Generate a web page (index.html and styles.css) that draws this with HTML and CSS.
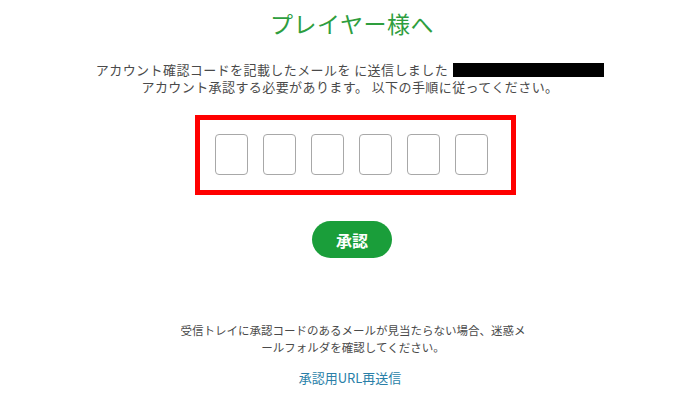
FILE: index.html
```html
<!DOCTYPE html>
<html lang="ja">
<head>
<meta charset="utf-8">
<title>承認</title>
<link rel="stylesheet" href="styles.css">
</head>
<body>
<main class="page">
  <h1 class="title">プレイヤー様へ</h1>
  <p class="desc">アカウント確認コードを記載したメールを に送信しました<span class="redacted"></span><br>アカウント承認する必要があります。 以下の手順に従ってください。</p>
  <div class="code-box">
    <input class="digit" type="text" maxlength="1">
    <input class="digit" type="text" maxlength="1">
    <input class="digit" type="text" maxlength="1">
    <input class="digit" type="text" maxlength="1">
    <input class="digit" type="text" maxlength="1">
    <input class="digit" type="text" maxlength="1">
  </div>
  <button class="btn" type="button">承認</button>
  <p class="notice">受信トレイに承認コードのあるメールが見当たらない場合、迷惑メ<br>ールフォルダを確認してください。</p>
  <a class="resend" href="#">承認用URL再送信</a>
</main>
</body>
</html>
```

FILE: styles.css
```css
html, body {
  margin: 0;
  padding: 0;
  background: #ffffff;
}

body {
  font-family: "Noto Sans CJK JP", "Noto Sans", sans-serif;
  color: #4a4a4a;
}

.page {
  display: flex;
  flex-direction: column;
  align-items: center;
  width: 700px;
  padding-top: 8px;
}

.title {
  margin: 0;
  font-size: 23px;
  line-height: 30px;
  font-weight: 400;
  letter-spacing: 0.5px;
  color: #2e9e3e;
  padding-left: 4px;
}

.desc {
  margin: 23px 0 0;
  font-size: 13px;
  line-height: 17px;
  letter-spacing: 0.42px;
  text-align: center;
  color: #4a4a4a;
}

.redacted {
  display: inline-block;
  width: 151px;
  height: 14px;
  margin-left: 5px;
  background: #000;
  vertical-align: -2px;
}

.code-box {
  display: flex;
  gap: 15px;
  box-sizing: border-box;
  width: 321px;
  height: 80px;
  margin-top: 20px;
  margin-left: 11px;
  padding: 14px 23px 15px 15px;
  border: 5px solid #ff0000;
}

.digit {
  box-sizing: border-box;
  width: 33px;
  height: 41px;
  padding: 0;
  border: 1px solid #a8a8a8;
  border-radius: 4px;
  background: #fff;
}

.btn {
  margin-top: 26px;
  margin-left: 4px;
  width: 80px;
  height: 37px;
  border: none;
  border-radius: 19px;
  background: #1a9e3a;
  color: #ffffff;
  font-family: "Noto Sans CJK JP", sans-serif;
  font-size: 16px;
  font-weight: 700;
  padding: 0;
}

.notice {
  margin: 64px 0 0;
  font-size: 11.5px;
  line-height: 17px;
  text-align: center;
  color: #4a4a4a;
  padding-left: 6px;
}

.resend {
  margin-top: 13px;
  font-size: 13px;
  line-height: 17px;
  color: #2a7fa8;
  text-decoration: none;
}
```
